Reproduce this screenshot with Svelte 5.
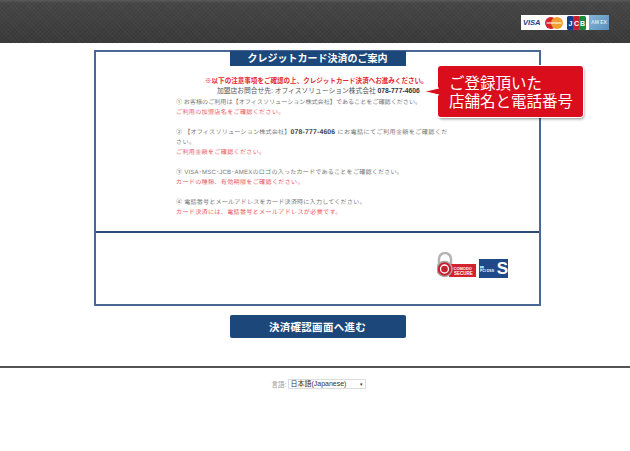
<script>
  const notes = [
    { lead: '① お客様のご利用は【オフィスソリューション株式会社】であることをご確認ください。', red: 'ご利用の加盟店名をご確認ください。' },
    { lead: '② 【オフィスソリューション株式会社】', phone: '078-777-4606', tail: ' にお電話にてご利用金額をご確認ください。', red: 'ご利用金額をご確認ください。', wide: true },
    { lead: '③ VISA･MSC･JCB･AMEXのロゴの入ったカードであることをご確認ください。', red: 'カードの種類、有効期限をご確認ください。', wide: true },
    { lead: '④ 電話番号とメールアドレスをカード決済時に入力してください。', red: 'カード決済には、電話番号とメールアドレスが必要です。', wide: true }
  ];
</script>

<div class="page">
  <header class="top">
    <div class="cards">
      <span class="visa">VISA</span>
      <svg class="mc" width="18" height="12" viewBox="0 0 18 12">
        <circle cx="6" cy="6" r="6" fill="#d8232f" />
        <circle cx="12" cy="6" r="6" fill="#f0a030" />
        <rect x="1.500" y="5" width="15" height="2" fill="#fff" opacity="0.55" />
      </svg>
      <svg class="jcb" width="19" height="14" viewBox="0 0 19 14">
        <rect x="0" y="0" width="7" height="14" rx="1.500" fill="#123f8c" />
        <rect x="6" y="0" width="7" height="14" rx="1.500" fill="#c8202f" />
        <rect x="12" y="0" width="7" height="14" rx="1.500" fill="#1c8a3c" />
        <text x="1.500" y="10" font-size="7" font-weight="700" fill="#fff">J</text>
        <text x="7" y="10" font-size="7" font-weight="700" fill="#fff">C</text>
        <text x="13" y="10" font-size="7" font-weight="700" fill="#fff">B</text>
      </svg>
      <span class="amex">AM EX</span>
    </div>
  </header>

  <main class="content">
    <section class="box">
      <div class="upper">
        <h1 class="title">クレジットカード決済のご案内</h1>
        <p class="attention">※以下の注意事項をご確認の上、クレジットカード決済へお進みください。</p>
        <p class="contact">加盟店お問合せ先: オフィスソリューション株式会社 <b>078-777-4606</b></p>
        <div class="notes">
          {#each notes as note}
            <div class="note">
              <p class:wide={note.wide}><span>{note.lead}</span>{#if note.phone}<b>{note.phone}</b><span class="tail">{note.tail}</span>{/if}</p>
              <p class="red">{note.red}</p>
            </div>
          {/each}
        </div>
      </div>
      <div class="lower">
        <svg class="lock" width="41" height="29" viewBox="0 0 41 29">
          <path d="M2 14V7a6 6 0 0 1 12 0v7" fill="none" stroke="#b4b4b4" stroke-width="2.500" />
          <rect x="12" y="12" width="27" height="13" fill="#d2232f" />
          <circle cx="7.500" cy="17" r="7.500" fill="#c8202c" stroke="#a8a8a8" stroke-width="1.500" />
          <circle cx="7.500" cy="17" r="4" fill="none" stroke="#fff" stroke-width="1.300" />
          <text x="16.500" y="17.500" font-size="4" font-weight="700" fill="#fff">COMODO</text>
          <text x="17" y="23" font-size="4.500" font-weight="700" fill="#fff">SECURE</text>
        </svg>
        <div class="pci">
          <span class="pci-text"><i>▮▮</i>PCI DSS</span>
          <span class="pci-s">S</span>
        </div>
      </div>
    </section>
    <button class="next">決済確認画面へ進む</button>
  </main>

  <footer class="foot">
    <label class="lang">言語:
      <span class="select">日本語(Japanese)<i>▾</i></span>
    </label>
  </footer>

  <div class="callout">
    <svg class="tip" width="17" height="9" viewBox="0 0 17 9">
      <path d="M16 1L1 4.500L16 8" fill="#d90d1c" stroke="#fff" stroke-width="1" />
    </svg>
    ご登録頂いた<br />店舗名と電話番号
  </div>
</div>

<style>
  :global(body) {
    margin: 0;
    background: #fff;
  }

  .page {
    position: relative;
    width: 630px;
    height: 451px;
    overflow: hidden;
    font-family: "Liberation Sans", "Noto Sans CJK JP", sans-serif;
  }

  .top {
    height: 43px;
    padding: 15px 21px 0 0;
    box-sizing: border-box;
    display: flex;
    justify-content: flex-end;
    align-items: flex-start;
    background:
      repeating-linear-gradient(45deg, rgba(255, 255, 255, 0.025) 0 1px, transparent 1px 3px),
      repeating-linear-gradient(-45deg, rgba(0, 0, 0, 0.05) 0 1px, transparent 1px 3px),
      linear-gradient(#5a5a5a 0, #464646 3px, #3a3a3a 100%);
  }

  .cards {
    width: 88px;
    height: 15px;
    background: #fff;
    display: flex;
    align-items: center;
    padding-left: 2px;
    box-sizing: border-box;
  }

  .visa {
    width: 20px;
    font: italic 700 7.500px "Liberation Sans", sans-serif;
    color: #1b3f87;
  }

  .mc {
    margin-left: 2px;
    flex: none;
  }

  .jcb {
    margin-left: 4px;
    flex: none;
  }

  .amex {
    margin-left: 3px;
    flex: 1;
    height: 15px;
    background: linear-gradient(135deg, #86b4d8, #5a8fbc);
    color: #d5e4ef;
    font-size: 5px;
    font-weight: 700;
    line-height: 15px;
    text-align: center;
    white-space: nowrap;
  }

  .content {
    height: 323px;
    padding-top: 8px;
    box-sizing: border-box;
    display: flex;
    flex-direction: column;
    align-items: center;
  }

  .box {
    width: 447px;
    height: 256px;
    margin-top: -1px;
    margin-left: 5px;
    box-sizing: border-box;
    border: 2px solid #4a6896;
    display: flex;
    flex-direction: column;
  }

  .upper {
    height: 181px;
    box-sizing: border-box;
    border-bottom: 2px solid #2c4a75;
    display: flex;
    flex-direction: column;
    align-items: center;
    flex: none;
  }

  .title {
    margin: -1px 0 0;
    width: 176px;
    height: 15px;
    background: #1c477a;
    color: #fff;
    font-size: 10px;
    font-weight: 700;
    line-height: 15px;
    text-align: center;
    flex: none;
  }

  .attention {
    margin: 10px 0 0;
    width: 100%;
    padding-left: 109px;
    box-sizing: border-box;
    color: #e5262e;
    font-size: 6.550px;
    font-weight: 700;
    line-height: 9px;
    white-space: nowrap;
  }

  .contact {
    margin: 1px 0 0;
    width: 100%;
    padding-left: 121px;
    box-sizing: border-box;
    color: #555;
    font-size: 6.750px;
    line-height: 9px;
    white-space: nowrap;
  }

  .notes {
    width: 277px;
    align-self: flex-start;
    margin: 3px 0 0 80px;
    font-size: 6.100px;
    line-height: 10px;
    color: #777;
    text-rendering: geometricPrecision;
  }

  .note {
    margin-bottom: 10px;
  }

  .note p {
    margin: 0;
  }

  .note .wide {
    letter-spacing: 0.180px;
  }

  .note b {
    color: #444;
    font-size: 6.850px;
  }

  .note .tail {
    letter-spacing: 0.400px;
  }

  .contact b {
    color: #333;
  }

  .note .red {
    color: #e95a5f;
    letter-spacing: 0.300px;
  }

  .lower {
    flex: 1;
    display: flex;
    justify-content: flex-end;
    align-items: flex-start;
    padding: 19px 31px 0 0;
  }

  .lock {
    flex: none;
  }

  .pci {
    width: 29px;
    height: 19px;
    margin-top: 7px;
    margin-left: 1px;
    background: #1f4a8a;
    color: #fff;
    display: flex;
    align-items: flex-end;
    justify-content: space-between;
    flex: none;
  }

  .pci-text {
    font-size: 3.500px;
    font-weight: 700;
    margin: 0 0 4px 1px;
    white-space: nowrap;
    line-height: 5px;
  }

  .pci-text i {
    display: block;
    font-style: normal;
    font-size: 3px;
    line-height: 4px;
  }

  .pci-s {
    font-size: 17px;
    line-height: 19px;
    font-weight: 700;
  }

  .next {
    margin: 9px 0 0 5px;
    width: 176px;
    height: 23px;
    border: 0;
    border-radius: 2px;
    background: #1c477a;
    color: #fff;
    font: 700 10.500px "Liberation Sans", "Noto Sans CJK JP", sans-serif;
    letter-spacing: 0.300px;
    padding: 0;
  }

  .foot {
    border-top: 2px solid #555;
    display: flex;
    justify-content: center;
    padding-top: 11px;
  }

  .lang {
    margin-left: 8px;
    font-size: 6.500px;
    color: #999;
    display: flex;
    align-items: center;
    gap: 2px;
  }

  .select {
    width: 78px;
    height: 10px;
    box-sizing: border-box;
    border: 1px solid #ddd;
    color: #333;
    font-size: 7px;
    line-height: 8px;
    padding-left: 1px;
    display: flex;
    justify-content: space-between;
    white-space: nowrap;
  }

  .select i {
    font-style: normal;
    font-size: 5px;
    margin-right: 2px;
  }

  .callout {
    position: absolute;
    left: 438px;
    top: 66px;
    width: 145px;
    height: 51px;
    box-sizing: border-box;
    padding: 9px 0 0 11px;
    background: #d90d1c;
    border-radius: 3px;
    box-shadow: 0 0 0 1px #fff, 1px 2px 3px rgba(0, 0, 0, 0.45);
    color: #fff;
    font-size: 15.500px;
    line-height: 18px;
    font-weight: 400;
  }

  .tip {
    position: absolute;
    left: -15px;
    top: 21px;
    overflow: visible;
  }
</style>
